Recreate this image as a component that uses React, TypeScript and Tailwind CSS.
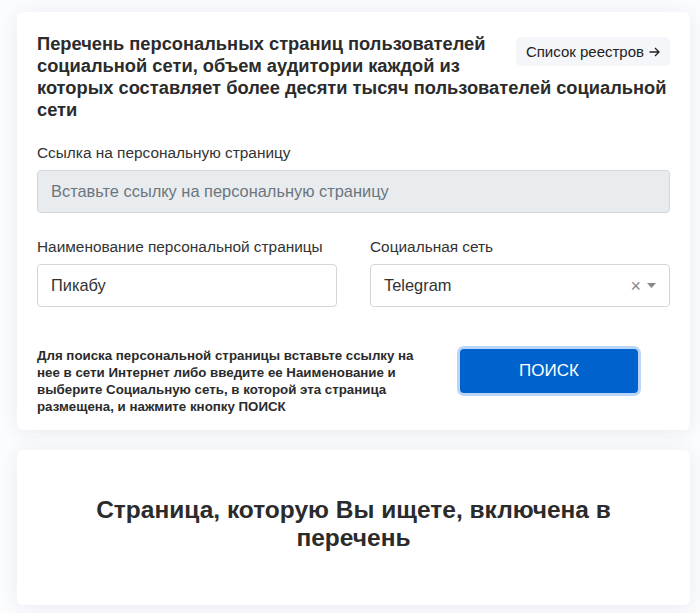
import React from 'react'

const font = { fontFamily: '"Liberation Sans", Arial, sans-serif' }

export default function App() {
  return (
    <div className="min-h-[613px] bg-[#fbfcfd] pt-3 pb-2 pl-[17px] pr-[10px]" style={font}>
      {/* Search form card */}
      <div className="rounded-[6px] bg-white px-5 pt-[21px] pb-[15px] shadow-[0_2px_18px_rgba(40,70,130,0.09)]">
        <a
          href="#"
          className="float-right ml-4 mt-[4px] flex items-center gap-[5px] rounded-[5px] bg-[#f4f6f9] px-[10px] py-[5px] text-[15px] leading-[19px] text-[#222]"
        >
          Список реестров
          <svg width="11" height="10" viewBox="0 0 11 10" fill="none" stroke="#222" strokeWidth="1.3">
            <path d="M0.5 5h9.5M6 1l4 4-4 4" />
          </svg>
        </a>
        <h1 className="text-[18.3px] font-bold leading-[22px] text-[#2b2b2b]">
          <span>
            Перечень персональных страниц пользователей социальной сети, объем аудитории каждой из
            которых составляет более десяти тысяч пользователей социальной сети
          </span>
        </h1>

        <div className="mt-[23px]">
          <label className="block text-[15.4px] leading-[18px] text-[#333]">
            Ссылка на персональную страницу
          </label>
          <input
            disabled
            placeholder="Вставьте ссылку на персональную страницу"
            className="mt-[8px] block h-[43px] w-full rounded-[4px] border border-[#d2d6db] bg-[#e9ecef] px-[13px] text-[16.4px] text-[#333] placeholder:text-[#6c757d]"
          />
        </div>

        <div className="mt-[25px] grid grid-cols-2 gap-[33px]">
          <div>
            <label className="block text-[15.4px] leading-[18px] text-[#333]">
              Наименование персональной страницы
            </label>
            <input
              defaultValue="Пикабу"
              className="mt-[8px] block h-[43px] w-full rounded-[4px] border border-[#d2d6db] bg-white px-[13px] text-[16.4px] text-[#333] outline-none"
            />
          </div>
          <div>
            <label className="block text-[15.4px] leading-[18px] text-[#333]">Социальная сеть</label>
            <div className="mt-[8px] flex h-[43px] items-center rounded-[4px] border border-[#d2d6db] bg-white pl-[13px] pr-[13px] text-[16.4px] text-[#333]">
              <span className="flex-1">Telegram</span>
              <span className="mr-[6px] text-[18px] leading-none text-[#888]">×</span>
              <svg width="9" height="5" viewBox="0 0 9 5" className="fill-[#888]">
                <path d="M0 0h9L4.5 5z" />
              </svg>
            </div>
          </div>
        </div>

        <div className="mt-[40px] flex items-center">
          <p className="w-[392px] text-[13.3px] font-bold leading-[17px] text-[#2b2b2b]">
            Для поиска персональной страницы вставьте ссылку на нее в сети Интернет либо введите ее
            Наименование и выберите Социальную сеть, в которой эта страница размещена, и нажмите
            кнопку ПОИСК
          </p>
          <button className="ml-[31px] mb-[20px] h-[44px] w-[178px] rounded-[4px] bg-[#0062cc] text-[17px] text-white ring-[3px] ring-[#b9d6f8]">
            ПОИСК
          </button>
        </div>
      </div>

      {/* Result card */}
      <div className="mt-5 rounded-[6px] bg-white pt-[46px] pb-[53px] shadow-[0_2px_18px_rgba(40,70,130,0.09)]">
        <h2 className="mx-auto max-w-[540px] text-center text-[24.5px] font-bold leading-[28px] text-[#2b2b2b]">
          Страница, которую Вы ищете, включена в перечень
        </h2>
      </div>
    </div>
  )
}
